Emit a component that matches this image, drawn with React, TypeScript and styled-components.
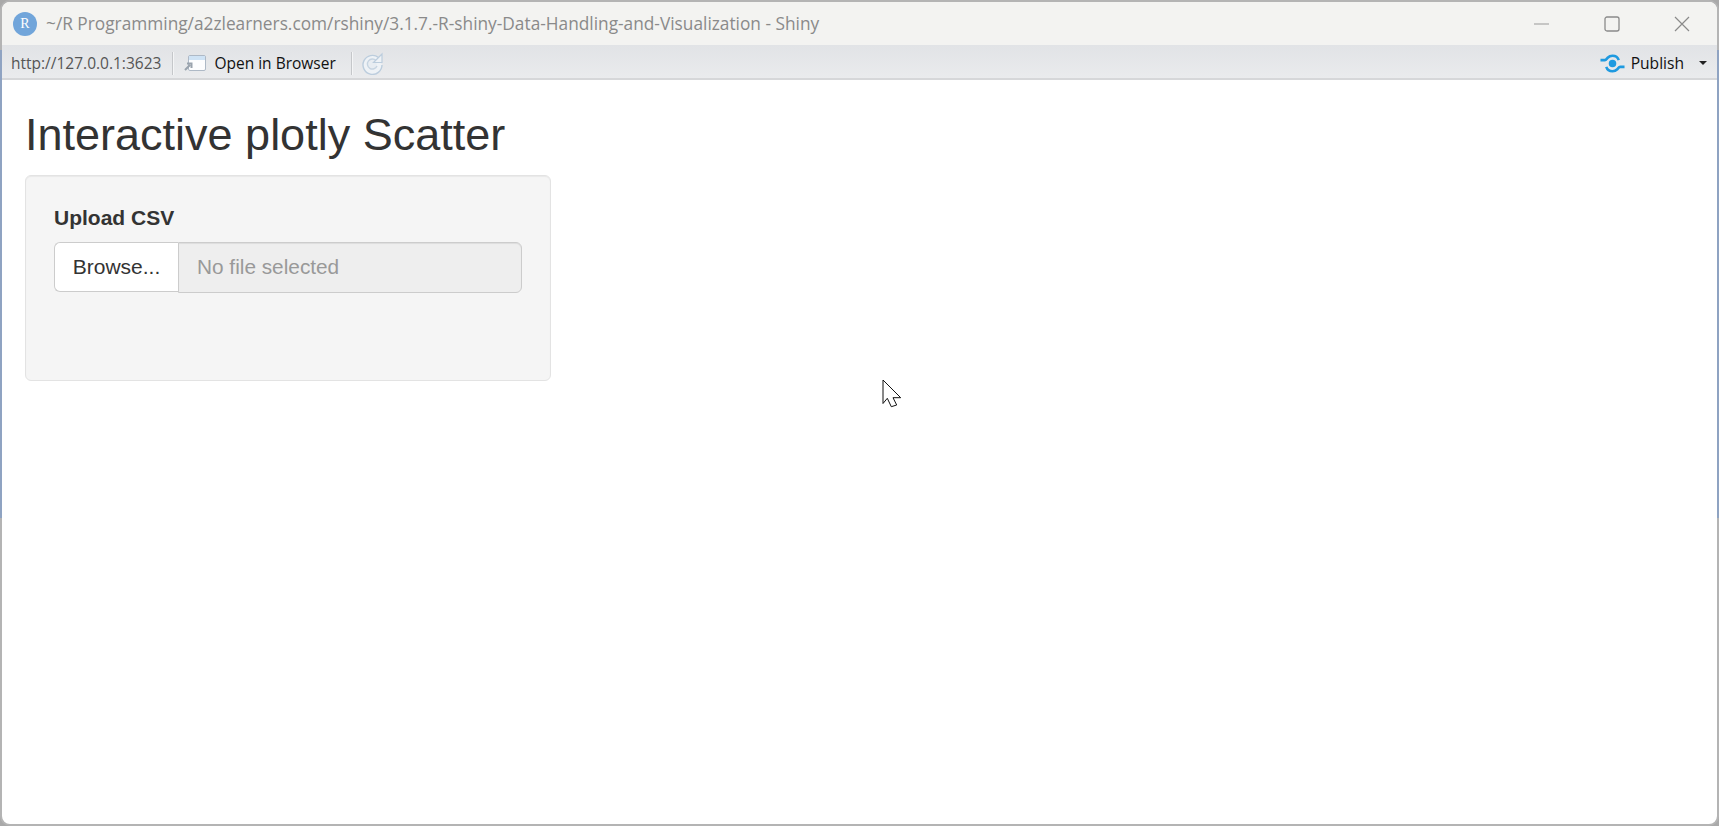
import React from "react";
import styled, { createGlobalStyle } from "styled-components";

const Global = createGlobalStyle`
  html, body { margin: 0; padding: 0; width: 100%; height: 100%; overflow: hidden; background: #b9b9b9; }
  #root { width: 100%; height: 100%; }
  * { box-sizing: border-box; }
`;

const Desktop = styled.div`
  position: relative;
  width: 1719px;
  height: 826px;
  background: #a9a9a9;
`;

const Win = styled.div`
  display: flex;
  flex-direction: column;
  width: 1719px;
  height: 826px;
  border: 2px solid #b4b4b4;
  border-radius: 10px;
  overflow: hidden;
  background: #fff;
`;

const EdgeStripe = styled.div<{ $side: "left" | "right" }>`
  position: absolute;
  top: 50px;
  height: 468px;
  width: 2px;
  background: #8fa3c2;
  ${(p) => (p.$side === "left" ? "left: 0;" : "right: 0;")}
`;

const TitleBar = styled.div`
  display: flex;
  align-items: center;
  height: 43px;
  flex: none;
  padding-left: 11px;
  background: #f3f3f1;
  font-family: "Open Sans", "Noto Sans", sans-serif;
`;

const RBadge = styled.div`
  width: 24px;
  height: 24px;
  border-radius: 50%;
  background: #71a5da;
  color: #fff;
  display: flex;
  align-items: center;
  justify-content: center;
  font: 14px "Liberation Serif", serif;
`;

const TitleText = styled.div`
  margin-left: 9px;
  flex: 1;
  font-size: 17.3px;
  color: #8a8a8a;
  white-space: nowrap;
`;

const WinButton = styled.div`
  width: 70px;
  height: 100%;
  display: flex;
  align-items: center;
  justify-content: center;
`;

const ToolBar = styled.div`
  display: flex;
  align-items: center;
  height: 35px;
  flex: none;
  padding: 3px 9px 0 9px;
  background: linear-gradient(#e1e3e6, #eaebed);
  border-bottom: 2px solid #d6d7d9;
  font-family: "Open Sans", "Noto Sans", sans-serif;
  font-size: 15.6px;
`;

const Url = styled.span`
  color: #555;
  font-size: 15.5px;
`;

const Sep = styled.div<{ $before: number; $after: number }>`
  width: 2px;
  height: 23px;
  margin: 0 ${(p) => p.$after}px 0 ${(p) => p.$before}px;
  background: linear-gradient(90deg, #c5c7ca 50%, #f4f5f6 50%);
`;

const ToolLabel = styled.span`
  margin-left: 7px;
  color: #111;
  font-size: 15.5px;
`;

const Spacer = styled.div`
  flex: 1;
`;

const PublishLabel = styled.span`
  margin-left: 6px;
  color: #111;
`;

const Caret = styled.div`
  margin: 0 1px 0 15px;
  border-left: 4px solid transparent;
  border-right: 4px solid transparent;
  border-top: 4px solid #222;
`;

const Page = styled.main`
  flex: 1;
  padding: 0 23px;
  font-family: "Liberation Sans", Arial, sans-serif;
  color: #333;
`;

const Heading = styled.h2`
  margin: 0;
  padding-top: 29px;
  height: 95px;
  font-size: 45px;
  line-height: 52px;
  font-weight: 400;
`;

const Well = styled.div`
  width: 526px;
  height: 206px;
  padding: 30px 28px;
  background: #f5f5f5;
  border: 1px solid #e3e3e3;
  border-radius: 6px;
  box-shadow: inset 0 1px 1px rgba(0, 0, 0, 0.05);
`;

const Label = styled.label`
  display: block;
  font-size: 21px;
  line-height: 24px;
  font-weight: 700;
  margin-bottom: 12px;
`;

const FileRow = styled.div`
  display: flex;
  height: 51px;
`;

const Browse = styled.button`
  width: 124px;
  height: 50px;
  background: #fff;
  border: 1px solid #ccc;
  border-right: none;
  border-radius: 6px 0 0 6px;
  padding: 0;
  font: 21px "Liberation Sans", Arial, sans-serif;
  color: #333;
`;

const FileName = styled.div`
  flex: 1;
  display: flex;
  align-items: center;
  padding-left: 18px;
  padding-bottom: 2px;
  background: #eee;
  border: 1px solid #ccc;
  border-radius: 0 6px 6px 0;
  box-shadow: inset 0 1px 1px rgba(0, 0, 0, 0.075);
  font-size: 20.8px;
  color: #999;
`;

const Cursor = styled.svg`
  position: absolute;
  left: 882px;
  top: 379px;
`;

export default function App() {
  return (
    <Desktop>
      <Global />
      <Win>
        <TitleBar>
          <RBadge>R</RBadge>
          <TitleText>~/R Programming/a2zlearners.com/rshiny/3.1.7.-R-shiny-Data-Handling-and-Visualization - Shiny</TitleText>
          <WinButton>
            <svg width="16" height="16" viewBox="0 0 16 16"><path d="M0 8h15" stroke="#999" strokeWidth="1.2" /></svg>
          </WinButton>
          <WinButton>
            <svg width="16" height="16" viewBox="0 0 16 16"><rect x="1" y="1" width="14" height="14" rx="2" fill="none" stroke="#8a8a8a" strokeWidth="1.3" /></svg>
          </WinButton>
          <WinButton>
            <svg width="16" height="16" viewBox="0 0 16 16"><path d="M1 1l14 14M15 1L1 15" stroke="#8a8a8a" strokeWidth="1.2" /></svg>
          </WinButton>
        </TitleBar>
        <ToolBar>
          <Url>http://127.0.0.1:3623</Url>
          <Sep $before={11} $after={9} />
          <svg width="24" height="18" viewBox="0 0 24 18">
            <rect x="5.5" y="1.5" width="17" height="15" rx="1.5" fill="#fdfdfe" stroke="#aeb9c6" />
            <rect x="6" y="2" width="16" height="4" fill="#cfe3f5" />
            <path d="M2 16l5-5M4 9.5h4.500V14" fill="none" stroke="#9aa3ad" strokeWidth="2" />
          </svg>
          <ToolLabel>Open in Browser</ToolLabel>
          <Sep $before={15} $after={8} />
          <svg width="23" height="23" viewBox="0 0 23 23">
            <path d="M17.500 5.500A9.500 9.500 0 1 0 21 13" fill="#eef2f6" stroke="#bccddd" strokeWidth="1.400" />
            <path d="M15 8.500A5 5 0 1 0 16 14" fill="#e8edf2" stroke="#c6d4e1" strokeWidth="1.400" />
            <path d="M21 2v8.500h-8.500z" fill="#eef2f6" stroke="#bccddd" strokeWidth="1.200" />
          </svg>
          <Spacer />
          <svg width="25" height="19" viewBox="0 0 26 19">
            <circle cx="13" cy="9.500" r="3.900" fill="#1f9ae0" />
            <path d="M0.500 6H5C6.500 6 7 4.500 8 3.500 9.500 2 11 1.500 13 1.500c3 0 5.500 1.500 6.500 4.500M25.500 13H21c-1.500 0-2 1.500-3 2.500-1.500 1.500-3 2-5 2-3 0-5.500-1.500-6.500-4.500" fill="none" stroke="#1f9ae0" strokeWidth="2.700" />
          </svg>
          <PublishLabel>Publish</PublishLabel>
          <Caret />
        </ToolBar>
        <Page>
          <Heading>Interactive plotly Scatter</Heading>
          <Well>
            <Label>Upload CSV</Label>
            <FileRow>
              <Browse>Browse...</Browse>
              <FileName>No file selected</FileName>
            </FileRow>
          </Well>
        </Page>
      </Win>
      <EdgeStripe $side="left" />
      <EdgeStripe $side="right" />
      <Cursor width="21" height="30" viewBox="0 0 21 30">
        <path d="M1 1V24.500L5.300 19.300 9.300 27.700 14.700 26 11 18.700H18.700z" fill="#fff" stroke="#111" strokeWidth="1" strokeLinejoin="round" />
      </Cursor>
    </Desktop>
  );
}
